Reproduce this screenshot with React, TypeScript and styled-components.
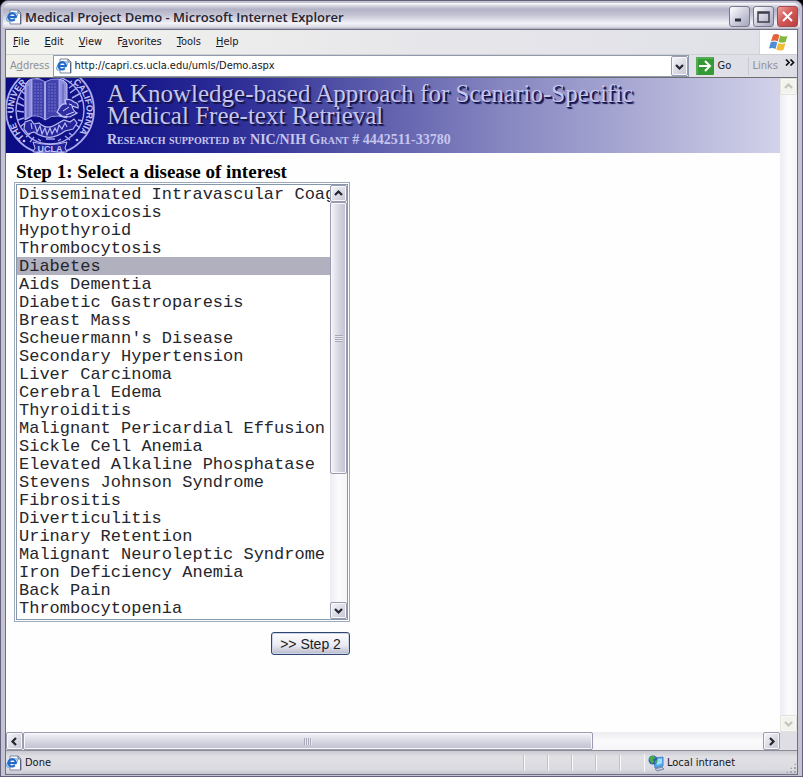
import React, { useState } from "react";
import styled, { createGlobalStyle, css } from "styled-components";

const GlobalStyle = createGlobalStyle`
  * { box-sizing: border-box; }
  html, body { margin: 0; background: #000; }
  button, input, select { font: inherit; color: inherit; margin: 0; }
`;

const Window = styled.div`
  height: 100vh;
  min-height: 480px;
  display: flex;
  flex-direction: column;
  padding: 2px 2px 1px;
  border: 1px solid #62627e;
  border-radius: 8px 8px 0 0;
  background: #c3c3d2;
  color: #16161c;
  font: 11px/14px "DejaVu Sans Condensed", "DejaVu Sans", sans-serif;
`;

const TitleBar = styled.header`
  flex: 0 0 26px;
  display: flex;
  align-items: center;
  gap: 3px;
  padding: 1px 2px 0 3px;
  border-radius: 6px 6px 0 0;
  background: linear-gradient(#fff 0, #d8d8e2 10%, #b2b2c6 24%, #c6c6d6 48%, #f2f2f8 78%, #dcdce6 92%, #a8a8b8 100%);
`;

const Title = styled.h1`
  flex: 1;
  margin: 0;
  color: #25252f;
  font: 600 13px/20px "Open Sans", "Noto Sans", sans-serif;
  white-space: nowrap;
`;

const CaptionButton = styled.button<{ $close?: boolean }>`
  width: 21px;
  height: 21px;
  padding: 0;
  display: flex;
  align-items: center;
  justify-content: center;
  border: 1px solid ${p => (p.$close ? "#a8474f" : "#77778f")};
  border-radius: 3px;
  background: ${p => (p.$close ? "linear-gradient(135deg, #eea29c, #d45b58 45%, #b93e42)" : "linear-gradient(135deg, #fff, #cfcfe0 50%, #a5a5bd)")};
`;

const Frame = styled.div`
  flex: 1;
  min-height: 0;
  display: flex;
  flex-direction: column;
  margin: 0 2px;
  border: 1px solid #6f6f86;
`;

const MenuBar = styled.nav`
  flex: 0 0 25px;
  display: flex;
  align-items: stretch;
  border-bottom: 1px solid #d0d0d4;
  background: linear-gradient(90deg, #f3f3ee, #e5e5ea 60%, #e0e0e8);
`;

const MenuItem = styled.button`
  padding: 0 8px 0 7px;
  border: 0;
  background: none;
`;

const Brand = styled.div`
  width: 38px;
  margin-left: auto;
  display: grid;
  place-items: center;
  border-left: 1px solid #d4d4dc;
  background: #fff;
`;

const AddressBar = styled.form`
  flex: 0 0 23px;
  display: flex;
  align-items: center;
  border-bottom: 1px solid #6d6d72;
  background: linear-gradient(90deg, #f1f1ec, #e3e3e9 80%, #dddde6);
`;

const AddressLabel = styled.label`
  padding: 0 4px 0 4px;
  color: #8f8f95;
`;

const AddressBox = styled.div`
  flex: 1;
  height: 22px;
  display: flex;
  align-items: center;
  gap: 2px;
  padding-left: 2px;
  border: 1px solid #8f9cad;
  background: #fff;
`;

const AddressInput = styled.input`
  flex: 1;
  min-width: 0;
  padding: 0;
  border: 0;
  outline: 0;
  background: none;
`;

const raised = css`
  border: 1px solid #9a9ab0;
  border-radius: 2px;
  box-shadow: inset 0 0 0 1px #f8f8fc;
`;

const ArrowButton = styled.button<{ $wide?: boolean }>`
  ${raised}
  flex: 0 0 17px;
  width: ${p => (p.$wide ? "17px" : "auto")};
  min-height: 17px;
  padding: 0;
  display: grid;
  place-items: center;
  color: #25252d;
  background: linear-gradient(135deg, #f6f6fa, #c4c4d4);
  &:disabled {
    border-color: #e2e2da;
    color: #c4c4b8;
    background: #f3f3ee;
  }
`;

const ComboButton = styled(ArrowButton)`
  align-self: stretch;
`;

const GoButton = styled.button`
  display: flex;
  align-items: center;
  gap: 4px;
  width: 60px;
  padding: 0 0 0 7px;
  border: 0;
  border-right: 1px solid #c9c9d2;
  background: none;
`;

const Links = styled.div`
  display: flex;
  gap: 7px;
  padding: 0 2px 0 4px;
  color: #8f8f95;
`;

const MoreLinks = styled.button`
  padding: 0;
  height: 12px;
  display: flex;
  border: 0;
  background: none;
  color: #111;
`;

const Viewport = styled.div`
  flex: 1;
  min-height: 0;
  display: grid;
  grid-template: minmax(0, 1fr) 18px / minmax(0, 1fr) 17px;
  background: #fefefe;
`;

const Page = styled.main`
  overflow: hidden;
  color: #000;
  font-family: "Liberation Serif", serif;
`;

const Banner = styled.header`
  height: 75px;
  display: flex;
  gap: 11px;
  overflow: hidden;
  background: linear-gradient(90deg, #0b0b84 0%, #17178c 16%, #34349a 33%, #5656a9 45%, #8888c2 65%, #ababd5 82%, #d2d2ea 100%);
`;

const BannerText = styled.div`
  padding-top: 5px;
  color: #c6c6ee;
  white-space: nowrap;
`;

const BannerTitle = styled.h2`
  margin: 0;
  font: 400 25px/22px "Liberation Serif", serif;
  text-shadow: 1px 1px 0 #14144c, 2px 2px 1px #14144c;
`;

const Grant = styled.p`
  margin: 5px 0 0;
  font: small-caps 700 14px/16px "Liberation Serif", serif;
`;

const StepForm = styled.form`
  width: 344px;
  padding: 9px 0 0 8px;
  display: flex;
  flex-direction: column;
`;

const StepLabel = styled.label`
  padding-left: 2px;
  font: 700 19px/20px "Liberation Serif", serif;
  white-space: nowrap;
`;

const ListFrame = styled.div`
  padding: 1px;
  border: 1px solid #9aabc0;
`;

const ListInner = styled.div`
  display: flex;
  border: 1px solid #8798ac;
  background: #fff;
`;

const DiseaseList = styled.select`
  flex: 1;
  min-width: 0;
  height: 434px;
  padding: 0;
  border: 0;
  outline: 0;
  border-radius: 0;
  overflow: hidden;
  color: #26262c;
  background: #fff;
  font: 17px/18px "Liberation Mono", monospace;
  scrollbar-width: none;
  option {
    height: 18px;
    min-height: 18px;
    padding: 0 2px;
    line-height: 18px;
  }
  option:checked {
    color: #26262c;
    background: #b0b0be linear-gradient(#b0b0be, #b0b0be);
  }
`;

const Track = styled.div<{ $horizontal?: boolean }>`
  display: flex;
  flex-direction: ${p => (p.$horizontal ? "row" : "column")};
  background: linear-gradient(${p => (p.$horizontal ? "180deg" : "90deg")}, #ededf2, #fbfbfd 50%, #f5f5f8);
`;

const ListTrack = styled(Track)`
  width: 17px;
`;

const Thumb = styled.div<{ $horizontal?: boolean; $size: number }>`
  ${raised}
  flex: 0 0 ${p => p.$size}%;
  display: grid;
  place-items: center;
  background: linear-gradient(${p => (p.$horizontal ? "180deg" : "90deg")}, #f4f4f9, #d8d8e3 50%, #bfbfcf);
`;

const Run = styled.div<{ $horizontal?: boolean }>`
  flex: 1;
  min-width: 0;
  min-height: 0;
  display: flex;
  flex-direction: ${p => (p.$horizontal ? "row" : "column")};
`;

const Grip = styled.span<{ $horizontal?: boolean }>`
  width: 8px;
  height: 7px;
  background: repeating-linear-gradient(${p => (p.$horizontal ? "90deg" : "180deg")}, #a9a9ba 0 1px, #e9e9f0 1px 2px);
`;

const Corner = styled.div`
  background: #dedee4;
`;

const StepButton = styled.button`
  align-self: flex-end;
  width: 79px;
  height: 23px;
  margin-top: 10px;
  padding: 0;
  border: 1px solid #2f466e;
  border-radius: 3px;
  box-shadow: inset 0 0 0 1px #cdd5e8;
  color: #1c1c22;
  background: linear-gradient(#fff, #e9e9f1 60%, #b9b9cc);
  font: 14px/18px "Liberation Sans", sans-serif;
`;

const StatusBar = styled.footer`
  flex: 0 0 24px;
  display: flex;
  align-items: center;
  padding-top: 1px;
  border-top: 1px solid #8d8d96;
  background: linear-gradient(#c9c9d2, #e0e0e5 25%, #dadae0 80%, #c6c6d0);
`;

const StatusMessage = styled.div`
  flex: 1;
  display: flex;
  align-items: center;
  gap: 3px;
`;

const StatusCell = styled.div`
  width: 24px;
  height: 16px;
  border-left: 1px solid #f8f8fa;
  box-shadow: -1px 0 0 #c2c2cc;
`;

const Zone = styled.div`
  width: 141px;
  height: 18px;
  display: flex;
  align-items: center;
  gap: 2px;
  padding-left: 3px;
  border-left: 1px solid #f8f8fa;
`;

const SizeGrip = styled.span`
  width: 12px;
  height: 12px;
  align-self: flex-end;
  background: radial-gradient(circle, #a5a5b2 1px, transparent 1px) 0 0 / 4px 4px;
  clip-path: polygon(100% 0, 100% 100%, 0 100%);
`;

function IePage() {
  return (
    <svg width="16" height="16" viewBox="0 0 16 16" aria-hidden="true">
      <path d="M4 1h8l3 3v11H4z" fill="#fdfdff" stroke="#7c86a0" />
      <path d="M12 1v3h3M14.500 5v10" fill="none" stroke="#59627c" />
      <ellipse cx="6" cy="8" rx="6" ry="2.7" transform="rotate(-32 6 8)" fill="none" stroke="#5ba3df" />
      <path d="M8.800 10.400A3.700 3.700 0 1 1 9.800 8H3.500" fill="none" stroke="#2469c8" strokeWidth="2.100" />
    </svg>
  );
}

type Direction = "up" | "down" | "left" | "right";

const chevrons: Record<Direction, string> = {
  up: "M1 6l3.500-3.500L8 6",
  down: "M1 3l3.500 3.500L8 3",
  left: "M6 1L2.500 4.500L6 8",
  right: "M3 1l3.500 3.500L3 8",
};

function Chevron({ to }: { to: Direction }) {
  return (
    <svg width="9" height="9" viewBox="0 0 9 9" aria-hidden="true">
      <path d={chevrons[to]} fill="none" stroke="currentColor" strokeWidth="2.200" />
    </svg>
  );
}

function WindowsFlag() {
  return (
    <svg width="20" height="19" viewBox="0 0 20 19" aria-hidden="true">
      <path d="M4 2q3-2 6.500.2L8.600 8.500Q5.500 6.700 2 8.200z" fill="#e4633a" />
      <path d="M11.300 2.600q3.400 1.900 7.200.1L16.600 9q-3.500 1.600-7.100-.2z" fill="#83b83f" />
      <path d="M1.700 9.300Q5 7.800 8.300 9.600L6.500 16Q3.400 14.200 0 15.600z" fill="#4c8fd8" />
      <path d="M9.200 10q3.600 1.800 7.200.2L14.500 16.700q-3.700 1.800-7.200-.2z" fill="#f2bc37" />
    </svg>
  );
}

function Seal() {
  return (
    <svg width="90" height="75" viewBox="0 0 90 75" role="img" aria-label="The University of California, UCLA seal">
      <defs>
        <path id="seal-ring" d="M18.600 59.300A36.500 36.500 0 1 1 72 56.500" />
      </defs>
      <g fill="none" stroke="#a9a9ef">
        <circle cx="44" cy="32" r="44" strokeWidth="1.800" />
        <circle cx="44" cy="32" r="34" strokeWidth="1.400" />
        <path d="M19 16l-5-4M18 22l-6-4M18 28l-7-3M18 34l-7-1M18 40l-6 2M19 45l-5 4M19 10l-2-3M63 5l3-2M63 10l7-5M64 15l8-6M66 20l9-5M72 24l5-2M72 42l5 1M70 47l4 3" strokeWidth="1.500" />
      </g>
      <path d="M19 10Q19 3 26 1v37l-7 4z" fill="#8e8edb" stroke="#c4c4f7" />
      <path d="M53 1q6 1 8 5v34l-8-2z" fill="#8e8edb" stroke="#c4c4f7" />
      <path d="M26 1q8-1 13 3q6-4 14-3v37q-8-1-14 4q-5-5-13-4z" fill="#4242ae" stroke="#9c9ce2" />
      <path d="M28 6h9M28 9h9M28 12h9M28 15h9M28 18h9M28 21h9M28 24h9M28 27h9M28 30h9M28 33h9M28 36h9M42 6h9M42 9h9M42 12h9M42 15h9M42 18h9M42 21h9M42 24h9M42 27h9M42 30h9M42 33h9" stroke="#7272c9" strokeDasharray="2 1" />
      <path d="M39 4v38" stroke="#bcbcf0" strokeWidth="1.600" />
      <path d="M22 8v31M57 6v30" stroke="#5959bb" />
      <path d="M54 29q2-4 6-3l-1-4q5-2 9 2q5 1 4 6l-6-2q1 5 5 7l-7 4-8-1-5-4z" fill="#2e2ea2" stroke="#c4c4f7" strokeWidth="1.200" />
      <path d="M57 33l6-4M60 37l8-3M63 26l3 1" stroke="#d8d8ff" />
      <path d="M19 44l6-2 3 4 5-1q8 7 16 2l9-5 6 2 4-3 3 4-4 6-8 2q-15 12-31 1l-6 2-4-5z" fill="#25259b" stroke="#babaf2" strokeWidth="1.200" />
      <path d="M25 45l1 6M29 47l2 7 3-6 2 8 3-6 2 7 3-7 2 6 3-6 2 4 2-7 3 4 3-6 2 4" fill="none" stroke="#b4b4f2" strokeWidth="1.200" />
      <path d="M24 56l-4 3M28 59l-4 5M32 61l3 2M55 61l-3 2M59 58l5 4M63 55l4 3M40 61h9" fill="none" stroke="#a7a7eb" strokeWidth="1.400" />
      <path d="M27 64q17 5 34 0l-2 6 2 4H27l2-4z" fill="#22229a" stroke="#c1c1f3" />
      <g fill="#c5c5f4">
        <circle cx="5" cy="39" r="1.300" />
        <circle cx="18" cy="63" r="1.300" />
        <circle cx="71" cy="62" r="1.300" />
      </g>
      <g fill="#c5c5f4" fontFamily="Liberation Sans, sans-serif" fontWeight="700" fontSize="9">
        <text><textPath href="#seal-ring" startOffset="0">THE</textPath></text>
        <text><textPath href="#seal-ring" startOffset="27">UNIVER</textPath></text>
        <text><textPath href="#seal-ring" startOffset="111">CALIFORNIA</textPath></text>
        <text x="44" y="74" textAnchor="middle">UCLA</text>
      </g>
    </svg>
  );
}

const menus: [string, string, string][] = [
  ["", "F", "ile"],
  ["", "E", "dit"],
  ["", "V", "iew"],
  ["F", "a", "vorites"],
  ["", "T", "ools"],
  ["", "H", "elp"],
];

const diseases = [
  "Disseminated Intravascular Coag",
  "Thyrotoxicosis",
  "Hypothyroid",
  "Thrombocytosis",
  "Diabetes",
  "Aids Dementia",
  "Diabetic Gastroparesis",
  "Breast Mass",
  "Scheuermann's Disease",
  "Secondary Hypertension",
  "Liver Carcinoma",
  "Cerebral Edema",
  "Thyroiditis",
  "Malignant Pericardial Effusion",
  "Sickle Cell Anemia",
  "Elevated Alkaline Phosphatase",
  "Stevens Johnson Syndrome",
  "Fibrositis",
  "Diverticulitis",
  "Urinary Retention",
  "Malignant Neuroleptic Syndrome",
  "Iron Deficiency Anemia",
  "Back Pain",
  "Thrombocytopenia",
];

export default function App() {
  const [disease, setDisease] = useState("Diabetes");
  const [address, setAddress] = useState("http://capri.cs.ucla.edu/umls/Demo.aspx");
  return (
    <>
      <GlobalStyle />
      <Window>
        <TitleBar>
          <IePage />
          <Title>Medical Project Demo - Microsoft Internet Explorer</Title>
          <CaptionButton aria-label="Minimize">
            <svg width="15" height="15"><path d="M3 11h6" stroke="#30303b" strokeWidth="3" /></svg>
          </CaptionButton>
          <CaptionButton aria-label="Maximize">
            <svg width="15" height="15"><path d="M2 3h11v10H2zM2 4h11" fill="none" stroke="#3c3c49" strokeWidth="1.500" /></svg>
          </CaptionButton>
          <CaptionButton $close aria-label="Close">
            <svg width="15" height="15"><path d="M3 3l9 9M12 3l-9 9" stroke="#fff" strokeWidth="2" /></svg>
          </CaptionButton>
        </TitleBar>
        <Frame>
          <MenuBar>
            {menus.map(([before, key, after]) => (
              <MenuItem key={key + after}>{before}<u>{key}</u>{after}</MenuItem>
            ))}
            <Brand><WindowsFlag /></Brand>
          </MenuBar>
          <AddressBar onSubmit={e => e.preventDefault()}>
            <AddressLabel htmlFor="address">A<u>d</u>dress</AddressLabel>
            <AddressBox>
              <IePage />
              <AddressInput id="address" value={address} onChange={e => setAddress(e.target.value)} />
              <ComboButton type="button" aria-label="Address history"><Chevron to="down" /></ComboButton>
            </AddressBox>
            <GoButton type="submit">
              <svg width="18" height="18" viewBox="0 0 18 18" aria-hidden="true">
                <rect width="18" height="18" rx="1" fill="#349a36" />
                <path d="M1 17V1h16" fill="none" stroke="#72bd72" />
                <path d="M3 9h10M9 4l5 5-5 5" fill="none" stroke="#fff" strokeWidth="2" />
              </svg>
              Go
            </GoButton>
            <Links>
              Links
              <MoreLinks type="button" aria-label="More links">
                <svg width="10" height="7"><path d="M1 .5l3 3-3 3M5.500.5l3 3-3 3" fill="none" stroke="currentColor" strokeWidth="1.700" /></svg>
              </MoreLinks>
            </Links>
          </AddressBar>
          <Viewport>
            <Page>
              <Banner>
                <Seal />
                <BannerText>
                  <BannerTitle>A Knowledge-based Approach for Scenario-Specific<br />Medical Free-text Retrieval</BannerTitle>
                  <Grant>Research supported by NIC/NIH Grant # 4442511-33780</Grant>
                </BannerText>
              </Banner>
              <StepForm onSubmit={e => e.preventDefault()}>
                <StepLabel htmlFor="disease">Step 1: Select a disease of interest</StepLabel>
                <ListFrame>
                  <ListInner>
                    <DiseaseList id="disease" size={24} value={disease} onChange={e => setDisease(e.target.value)}>
                      {diseases.map(name => <option key={name}>{name}</option>)}
                    </DiseaseList>
                    <ListTrack>
                      <ArrowButton type="button" aria-label="Scroll list up"><Chevron to="up" /></ArrowButton>
                      <Run><Thumb $size={68}><Grip /></Thumb></Run>
                      <ArrowButton type="button" aria-label="Scroll list down"><Chevron to="down" /></ArrowButton>
                    </ListTrack>
                  </ListInner>
                </ListFrame>
                <StepButton type="submit">&gt;&gt; Step 2</StepButton>
              </StepForm>
            </Page>
            <Track>
              <ArrowButton disabled aria-label="Scroll page up"><Chevron to="up" /></ArrowButton>
              <Run />
              <ArrowButton disabled aria-label="Scroll page down"><Chevron to="down" /></ArrowButton>
            </Track>
            <Track $horizontal>
              <ArrowButton $wide aria-label="Scroll page left"><Chevron to="left" /></ArrowButton>
              <Run $horizontal><Thumb $horizontal $size={77}><Grip $horizontal /></Thumb></Run>
              <ArrowButton $wide aria-label="Scroll page right"><Chevron to="right" /></ArrowButton>
            </Track>
            <Corner />
          </Viewport>
          <StatusBar>
            <StatusMessage><IePage />Done</StatusMessage>
            <StatusCell /><StatusCell /><StatusCell /><StatusCell /><StatusCell />
            <Zone>
              <svg width="17" height="17" viewBox="0 0 17 17" aria-hidden="true">
                <path d="M6 3l9-1v9l-8 2z" fill="#55a8e8" stroke="#4a86c4" />
                <path d="M8 4l6-.5v5L9 10z" fill="#9dddff" />
                <path d="M7 14l7-2 2 2-7 2z" fill="#c9cee4" stroke="#7785a0" />
                <circle cx="5" cy="5" r="4.500" fill="#2b5fae" />
                <path d="M1 4q2-4 5-3l2 2-3 1 1 3-2 2-2-3zM7 6l2-1v2L7 9z" fill="#47ad48" />
              </svg>
              Local intranet
            </Zone>
            <SizeGrip />
          </StatusBar>
        </Frame>
      </Window>
    </>
  );
}
